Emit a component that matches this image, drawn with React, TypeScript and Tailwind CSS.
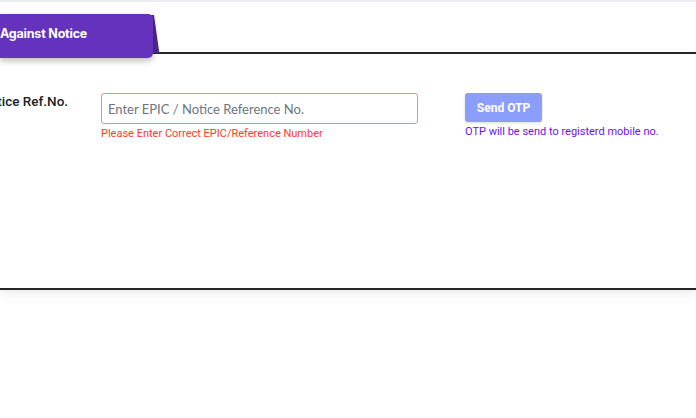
import React from "react";

const App: React.FC = () => {
  return (
    <div className="w-[696px] h-[418px] overflow-hidden bg-white border-t-2 border-[#ebebf1] font-['Roboto',sans-serif]">
      <div className="pt-[12px]">
        {/* tab */}
        <div className="relative z-10 w-[153px] h-[44px] -mb-[6px]">
          <div className="absolute left-[130px] top-[1px] w-[24px] h-[38px] bg-[#4b2a8c] skew-x-[8deg] origin-top-left" />
          <div className="relative h-full w-full bg-[#6432bd] rounded-r-[5px] shadow-[0_3px_6px_rgba(0,0,0,0.25)] flex items-center pb-[4px]">
            <span className="text-white text-[12.5px] font-bold font-['Inter',sans-serif] tracking-[-0.2px]">
              Against Notice
            </span>
          </div>
        </div>

        {/* card */}
        <div className="h-[238px] border-y-2 border-[#262626] bg-white shadow-[0_4px_10px_rgba(0,0,0,0.08)]">
          <div className="flex items-start pt-[39px]">
            <label className="-ml-[20px] w-[121px] -mt-[2px] text-[13.5px] font-medium text-[#222]">
              Notice Ref.No.
            </label>
            <div className="flex flex-col">
              <input
                type="text"
                placeholder="Enter EPIC / Notice Reference No."
                className="w-[317px] h-[31px] px-[6px] rounded-[3px] border border-[#ee8a8a] text-[13px] font-['Lato',sans-serif] placeholder:text-[#6c757d] outline-none"
              />
              <span className="mt-[2px] text-[11px] text-[#ff3b1e]">
                Please Enter Correct EPIC/Reference Number
              </span>
            </div>
            <div className="ml-[47px] flex flex-col">
              <button className="w-[77px] h-[29px] rounded-[3px] bg-[#8c9efc] text-white text-[12px] font-bold shadow-[0_1px_3px_rgba(0,0,0,0.15)]">
                Send OTP
              </button>
              <span className="mt-[2px] text-[11px] text-[#6a12ec]">
                OTP will be send to registerd mobile no.
              </span>
            </div>
          </div>
        </div>
      </div>
    </div>
  );
};

export default App;
